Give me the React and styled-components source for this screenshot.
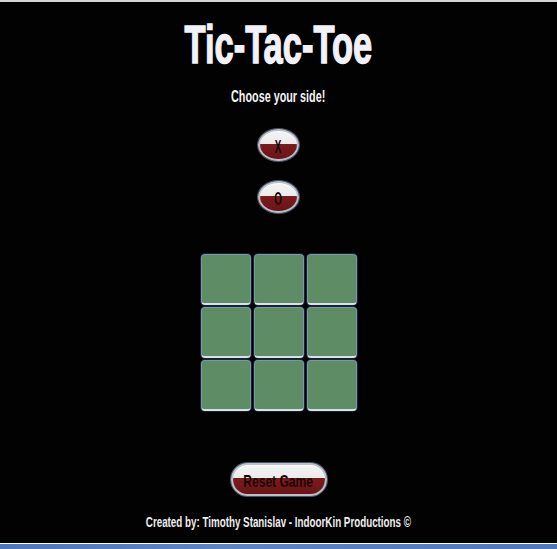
import React from "react";
import styled, { createGlobalStyle } from "styled-components";

const Global = createGlobalStyle`
  html, body { margin: 0; padding: 0; background: #000; }
  * { box-sizing: border-box; }
`;

const FONT = `"Liberation Sans", Arial, sans-serif`;

const Page = styled.div`
  height: 549px;
  display: flex;
  flex-direction: column;
  border-top: 2px solid #d4d4d4;
  background: #020202;
  font-family: ${FONT};
`;

const Main = styled.main`
  flex: 1;
  display: flex;
  flex-direction: column;
  align-items: center;
`;

/* condensed look: no narrow face is installed, so the glyphs are squeezed */
const Squeeze = styled.span`
  display: inline-block;
  white-space: nowrap;
  transform: scaleX(${(p) => p.$sx});
  transform-origin: center;
`;

const Title = styled.h1`
  margin: 16px 0 0;
  font-size: 53px;
  line-height: 53px;
  font-weight: 700;
  color: #f1f2f9;
  -webkit-text-stroke: 1.4px #f1f2f9;
`;

const Prompt = styled.p`
  margin: 16px 0 0;
  font-size: 17px;
  line-height: 20px;
  font-weight: 700;
  color: #f4f4f4;
`;

const SideButton = styled.button`
  width: 41px;
  height: 32px;
  margin-top: ${(p) => p.$top}px;
  border-radius: 50%;
  border: 2px solid #b9c0cc;
  box-shadow: 0 0 0 1px #4a5566, inset 0 1px 1px rgba(255, 255, 255, 0.7);
  background: linear-gradient(to bottom, #f4f4f4 0%, #ebebeb 46%, #7c1b1e 46%, #6a1417 100%);
  color: #140606;
  font-family: ${FONT};
  font-size: 18px;
  font-weight: 700;
  line-height: 1;
  padding: 3px 0 0;
  display: flex;
  align-items: center;
  justify-content: center;
  cursor: pointer;
`;

const Board = styled.div`
  margin-top: 41px;
  display: grid;
  grid-template-columns: repeat(3, 50px);
  grid-auto-rows: 51px;
  gap: 2px 3px;
`;

const Cell = styled.div`
  background: #5e8c65;
  border: 1px solid #7b95b0;
  border-bottom: 2px solid #d8e0ea;
  border-radius: 4px;
  box-shadow: 0 0 0 1px #1b2330;
`;

const ResetButton = styled.button`
  margin-top: 52px;
  width: 96px;
  height: 33px;
  border-radius: 17px;
  border: 2px solid #b9c0cc;
  box-shadow: 0 0 0 1px #4a5566, inset 0 1px 1px rgba(255, 255, 255, 0.7);
  background: linear-gradient(to bottom, #f4f4f4 0%, #ebebeb 44%, #7c1b1e 44%, #6a1417 100%);
  color: #1a0606;
  font-family: ${FONT};
  font-size: 17px;
  font-weight: 700;
  line-height: 1;
  padding: 3px 0 0;
  display: flex;
  align-items: center;
  justify-content: center;
  cursor: pointer;
`;

const Footer = styled.footer`
  margin-top: 18px;
  font-size: 14px;
  line-height: 16px;
  font-weight: 700;
  color: #eeeeee;
  text-align: center;
`;

const Taskbar = styled.div`
  height: 6px;
  border-top: 1px solid #ffffff;
  background: linear-gradient(to right, #4a78bd, #5a86c8 40%, #4b79be);
`;

export default function App() {
  const cells = Array.from({ length: 9 });
  return (
    <>
      <Global />
      <Page>
        <Main>
          <Title>
            <Squeeze $sx={0.65}>Tic-Tac-Toe</Squeeze>
          </Title>
          <Prompt>
            <Squeeze $sx={0.635}>Choose your side!</Squeeze>
          </Prompt>
          <SideButton $top={22}>
            <Squeeze $sx={0.55}>X</Squeeze>
          </SideButton>
          <SideButton $top={20}>
            <Squeeze $sx={0.55}>O</Squeeze>
          </SideButton>
          <Board>
            {cells.map((_, i) => (
              <Cell key={i} />
            ))}
          </Board>
          <ResetButton>
            <Squeeze $sx={0.71}>Reset Game</Squeeze>
          </ResetButton>
          <Footer>
            <Squeeze $sx={0.7}>Created by: Timothy Stanislav - IndoorKin Productions ©</Squeeze>
          </Footer>
        </Main>
        <Taskbar />
      </Page>
    </>
  );
}
